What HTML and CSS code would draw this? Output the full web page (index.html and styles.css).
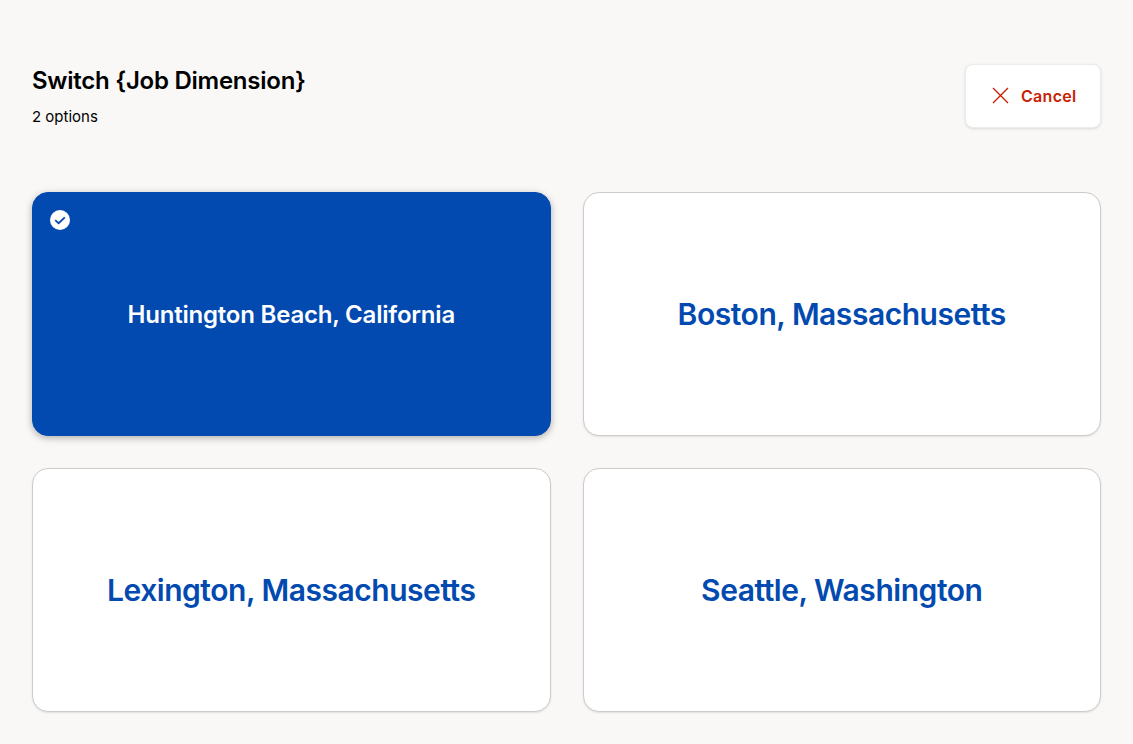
FILE: index.html
```html
<!DOCTYPE html>
<html lang="en">
<head>
    <meta charset="UTF-8">
    <meta name="viewport" content="width=device-width, initial-scale=1.0">
    <title>Switch Job Dimension</title>
    <link rel="stylesheet" href="styles.css">
</head>
<body>
    <div class="page">
        <div class="page-header">
            <div class="heading">
                <div class="page-title">Switch {Job Dimension}</div>
                <div class="page-count">2 options</div>
            </div>
            <div class="cancel-btn">
                <svg class="cancel-icon" width="18" height="18" viewBox="0 0 18 18">
                    <path d="M1 1 L16 16 M16 1 L1 16" fill="none" stroke="#c82205" stroke-width="1.4"/>
                </svg>
                <span>Cancel</span>
            </div>
        </div>

        <div class="option-grid">
            <div class="option-card selected">
                <svg class="check-icon" width="20" height="20" viewBox="0 0 20 20">
                    <circle cx="10" cy="10" r="10" fill="#fff"/>
                    <path d="M5.2 10.2 L8.6 13.2 L14.8 7.4" fill="none" stroke="#024ab0" stroke-width="1.8"/>
                </svg>
                Huntington Beach, California
            </div>
            <div class="option-card large">Boston, Massachusetts</div>
            <div class="option-card large">Lexington, Massachusetts</div>
            <div class="option-card large">Seattle, Washington</div>
        </div>
    </div>
</body>
</html>
```

FILE: styles.css
```css
* {
    margin: 0;
    padding: 0;
    box-sizing: border-box;
    font-family: Inter, 'Liberation Sans', sans-serif;
}

body {
    background-color: #f9f8f6;
    color: #000;
    overflow: hidden;
}

.page {
    display: flex;
    flex-direction: column;
    height: 744px;
    padding: 64px 32px 32px;
}

.page-header {
    display: flex;
    justify-content: space-between;
    align-items: flex-start;
    margin-bottom: 64px;
}

.heading {
    padding-top: 1px;
}

.page-title {
    font-size: 24px;
    font-weight: 600;
    line-height: 32px;
    letter-spacing: -0.25px;
}

.page-count {
    font-size: 15px;
    line-height: 20px;
    margin-top: 10px;
}

.cancel-btn {
    display: flex;
    align-items: center;
    gap: 11px;
    width: 136px;
    height: 64px;
    padding-left: 26px;
    background-color: #fff;
    border-radius: 8px;
    border: 1px solid #ececea;
    box-shadow: 0 1px 3px rgba(0,0,0,0.12);
    color: #c82205;
    font-size: 16px;
    font-weight: 600;
    letter-spacing: 0.3px;
}

.option-grid {
    display: grid;
    grid-template-columns: 1fr 1fr;
    grid-auto-rows: 244px;
    gap: 32px;
}

.option-card {
    position: relative;
    display: flex;
    justify-content: center;
    align-items: center;
    background-color: #fff;
    border: 1px solid #cccccc;
    border-radius: 16px;
    box-shadow: 0 1px 2px rgba(0,0,0,0.1);
    color: #024ab0;
}

.option-card.large {
    font-size: 30px;
    font-weight: 600;
    letter-spacing: -0.46px;
}

.option-card.selected {
    background-color: #024ab0;
    border-color: #024ab0;
    box-shadow: 0 2px 7px rgba(0,0,0,0.3);
    color: #fff;
    font-size: 24px;
    font-weight: 600;
    letter-spacing: -0.2px;
}

.check-icon {
    position: absolute;
    top: 17px;
    left: 17px;
}
```
